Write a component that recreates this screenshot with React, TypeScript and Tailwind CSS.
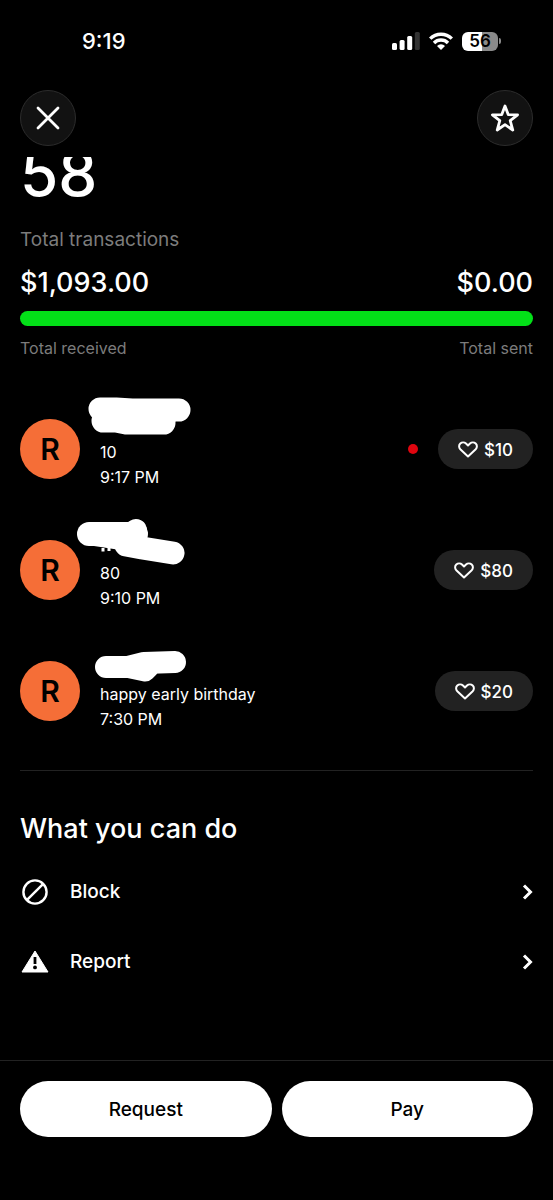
import type { ReactNode } from "react";

type Payment = {
  id: string;
  note: string;
  time: string;
  amount: string;
  unread?: boolean;
  cover: ReactNode;
};

const PAYMENTS: Payment[] = [
  {
    id: "p1",
    note: "10",
    time: "9:17 PM",
    amount: "$10",
    unread: true,
    cover: (
      <>
        <path d="M24 17 L40 17 L56 18 L103 18" strokeWidth="23" />
        <path d="M27 29 L40 29 L50 31 L88 31" strokeWidth="23" />
        <path d="M28 23 L90 26" strokeWidth="20" />
      </>
    ),
  },
  {
    id: "p2",
    note: "80",
    time: "9:10 PM",
    amount: "$80",
    cover: (
      <>
        <path d="M13 21 L60 21" strokeWidth="24" />
        <path d="M13 21 L46 26 L60 17" strokeWidth="22" />
        <path d="M50 32 L66 35 L97 40" strokeWidth="23" />
        <path d="M27 35 V38.5 M33 35 V38" strokeWidth="3" strokeLinecap="butt" />
      </>
    ),
  },
  {
    id: "p3",
    note: "happy early birthday",
    time: "7:30 PM",
    amount: "$20",
    cover: (
      <>
        <path d="M30 33 L52 33 L68 29 L99 28" strokeWidth="22" />
        <path d="M50 33 L69 37 L73 33" strokeWidth="21" />
      </>
    ),
  },
];

function StatusBar() {
  return (
    <div className="flex h-[82px] items-center justify-between pl-[82px] pr-[52px]">
      <span className="text-[22px] font-medium leading-6">9:19</span>
      <div className="flex items-center gap-[9px]">
        <svg width="28" height="18" viewBox="0 0 28 18" fill="#fff" aria-hidden="true">
          <rect x="0" y="11" width="5" height="7" rx="1.5" />
          <rect x="7.6" y="8" width="5" height="10" rx="1.5" />
          <rect x="15.2" y="4" width="5" height="14" rx="1.5" />
          <rect x="22.8" y="0" width="5" height="18" rx="1.5" fill="#333" />
        </svg>
        <svg width="24" height="18" viewBox="0 0 24 18" fill="none" stroke="#fff" strokeWidth="3.4" aria-hidden="true">
          <path d="M1.2 6.6 A15.4 15.4 0 0 1 22.8 6.6" />
          <path d="M5 11 A9.8 9.8 0 0 1 19 11" />
          <path d="M12 18 L8 14 A5.6 5.6 0 0 1 16 14 Z" fill="#fff" stroke="none" />
        </svg>
        <div className="flex items-center gap-px">
          <span className="flex h-[19px] w-9 items-center justify-center rounded-md bg-[linear-gradient(90deg,#fff_56%,#8a8a8a_56%)] text-[17px] font-semibold leading-none text-black">
            56
          </span>
          <span className="h-[6px] w-[2px] rounded-r-full bg-[#8a8a8a]" />
        </div>
      </div>
    </div>
  );
}

function Heart() {
  return (
    <svg width="20" height="17" viewBox="0 0 20 17" fill="none" stroke="#fff" strokeWidth="2" strokeLinejoin="round" aria-hidden="true">
      <path d="M10 15.4 L2.3 8.2 C0.7 6.6 0.7 4 2.3 2.5 C3.9 1 6.4 1 8 2.5 L10 4.4 L12 2.5 C13.6 1 16.1 1 17.7 2.5 C19.3 4 19.3 6.6 17.7 8.2 Z" />
    </svg>
  );
}

function PaymentRow({ payment }: { payment: Payment }) {
  return (
    <li className="flex items-center">
      <span className="flex size-[60px] shrink-0 items-center justify-center rounded-full bg-[#f56e37] text-[30px] font-semibold leading-none text-black">
        R
      </span>
      <div className="relative ml-5 min-w-0 flex-1 pt-8 text-base leading-[25px]">
        <p>{payment.note}</p>
        <p>{payment.time}</p>
        {/* name is scribbled out */}
        <svg
          className="absolute -left-6 -top-4"
          width="120"
          height="60"
          viewBox="0 0 120 60"
          fill="none"
          stroke="#fff"
          strokeLinecap="round"
          strokeLinejoin="round"
          aria-hidden="true"
        >
          {payment.cover}
        </svg>
      </div>
      {payment.unread && <span className="mr-5 size-[10px] rounded-full bg-[#e0050f]" />}
      <button type="button" className="flex h-10 items-center gap-[6px] rounded-full bg-[#222] px-5 pt-px text-[17px] font-medium leading-6">
        <Heart />
        {payment.amount}
      </button>
    </li>
  );
}

function ActionRow({ label, icon }: { label: string; icon: ReactNode }) {
  return (
    <button type="button" className="flex h-[70px] w-full items-center text-left text-[19px] font-medium leading-6">
      <span className="flex w-[50px]">{icon}</span>
      <span className="flex-1">{label}</span>
      <svg width="11" height="16" viewBox="0 0 11 16" fill="none" stroke="#fff" strokeWidth="3" aria-hidden="true">
        <path d="M2 1.5 L8.5 8 L2 14.5" />
      </svg>
    </button>
  );
}

export default function App() {
  return (
    <div className="flex min-h-screen flex-col bg-black font-['Inter','Liberation_Sans',sans-serif] text-white">
      <StatusBar />

      <header className="flex justify-between px-5 pb-[11px] pt-2">
        <button type="button" aria-label="Close" className="flex size-14 items-center justify-center rounded-full border border-[#2c2c2c] bg-[#121212]">
          <svg width="24" height="24" viewBox="0 0 24 24" fill="none" stroke="#fff" strokeWidth="2.8" strokeLinecap="round" aria-hidden="true">
            <path d="M2 2 L22 22 M22 2 L2 22" />
          </svg>
        </button>
        <button type="button" aria-label="Favorite" className="flex size-14 items-center justify-center rounded-full border border-[#2c2c2c] bg-[#121212]">
          <svg width="30" height="28" viewBox="0 0 30 28" fill="none" stroke="#fff" strokeWidth="2.8" strokeLinejoin="round" aria-hidden="true">
            <path d="M15 2 L18.2 10.6 L27.6 10.8 L20.2 16.6 L22.8 26 L15 20.7 L7.2 26 L9.8 16.6 L2.4 10.8 L11.8 10.6 Z" />
          </svg>
        </button>
      </header>

      <main className="px-5">
        {/* count is scrolled partly under the header */}
        <div className="flex h-12 items-end overflow-hidden">
          <p className="text-[62px] font-medium leading-none">58</p>
        </div>
        <h1 className="mt-[23px] text-[19px] leading-6 text-[#7c7c7c]">Total transactions</h1>

        <div className="mt-[13px] flex justify-between text-[27px] font-medium leading-9">
          <span>$1,093.00</span>
          <span>$0.00</span>
        </div>
        <div className="mt-[10px] h-[15px] rounded-full bg-[#03e018]" />
        <div className="mt-3 flex justify-between text-base leading-5 text-[#7c7c7c]">
          <span>Total received</span>
          <span>Total sent</span>
        </div>

        <ul className="mt-[50px] flex flex-col gap-[39px]">
          {PAYMENTS.map((p) => (
            <PaymentRow key={p.id} payment={p} />
          ))}
        </ul>

        <section className="mt-[38px] border-t border-[#222] pt-10">
          <h2 className="text-[27px] font-medium leading-9">What you can do</h2>
          <div className="mt-[10px]">
            <ActionRow
              label="Block"
              icon={
                <svg width="30" height="30" viewBox="0 0 30 30" fill="none" stroke="#fff" strokeWidth="2.4" aria-hidden="true">
                  <circle cx="15" cy="15" r="11.6" />
                  <path d="M6.8 23.2 L23.2 6.8" />
                </svg>
              }
            />
            <ActionRow
              label="Report"
              icon={
                <svg width="30" height="30" viewBox="0 0 30 30" aria-hidden="true">
                  <path d="M15 4 L28 25 H2 Z" fill="#fff" stroke="#fff" strokeWidth="1" strokeLinejoin="round" />
                  <path d="M13.6 10 H16.4 V17 H13.6 Z" fill="#000" />
                  <circle cx="15" cy="20.4" r="1.9" fill="#000" />
                </svg>
              }
            />
          </div>
        </section>
      </main>

      <footer className="mt-auto flex gap-[10px] border-t border-[#222] px-5 pb-[63px] pt-5">
        <button type="button" className="h-14 flex-1 rounded-full bg-white pt-0.5 text-[19px] font-medium text-black">
          Request
        </button>
        <button type="button" className="h-14 flex-1 rounded-full bg-white pt-0.5 text-[19px] font-medium text-black">
          Pay
        </button>
      </footer>
    </div>
  );
}
